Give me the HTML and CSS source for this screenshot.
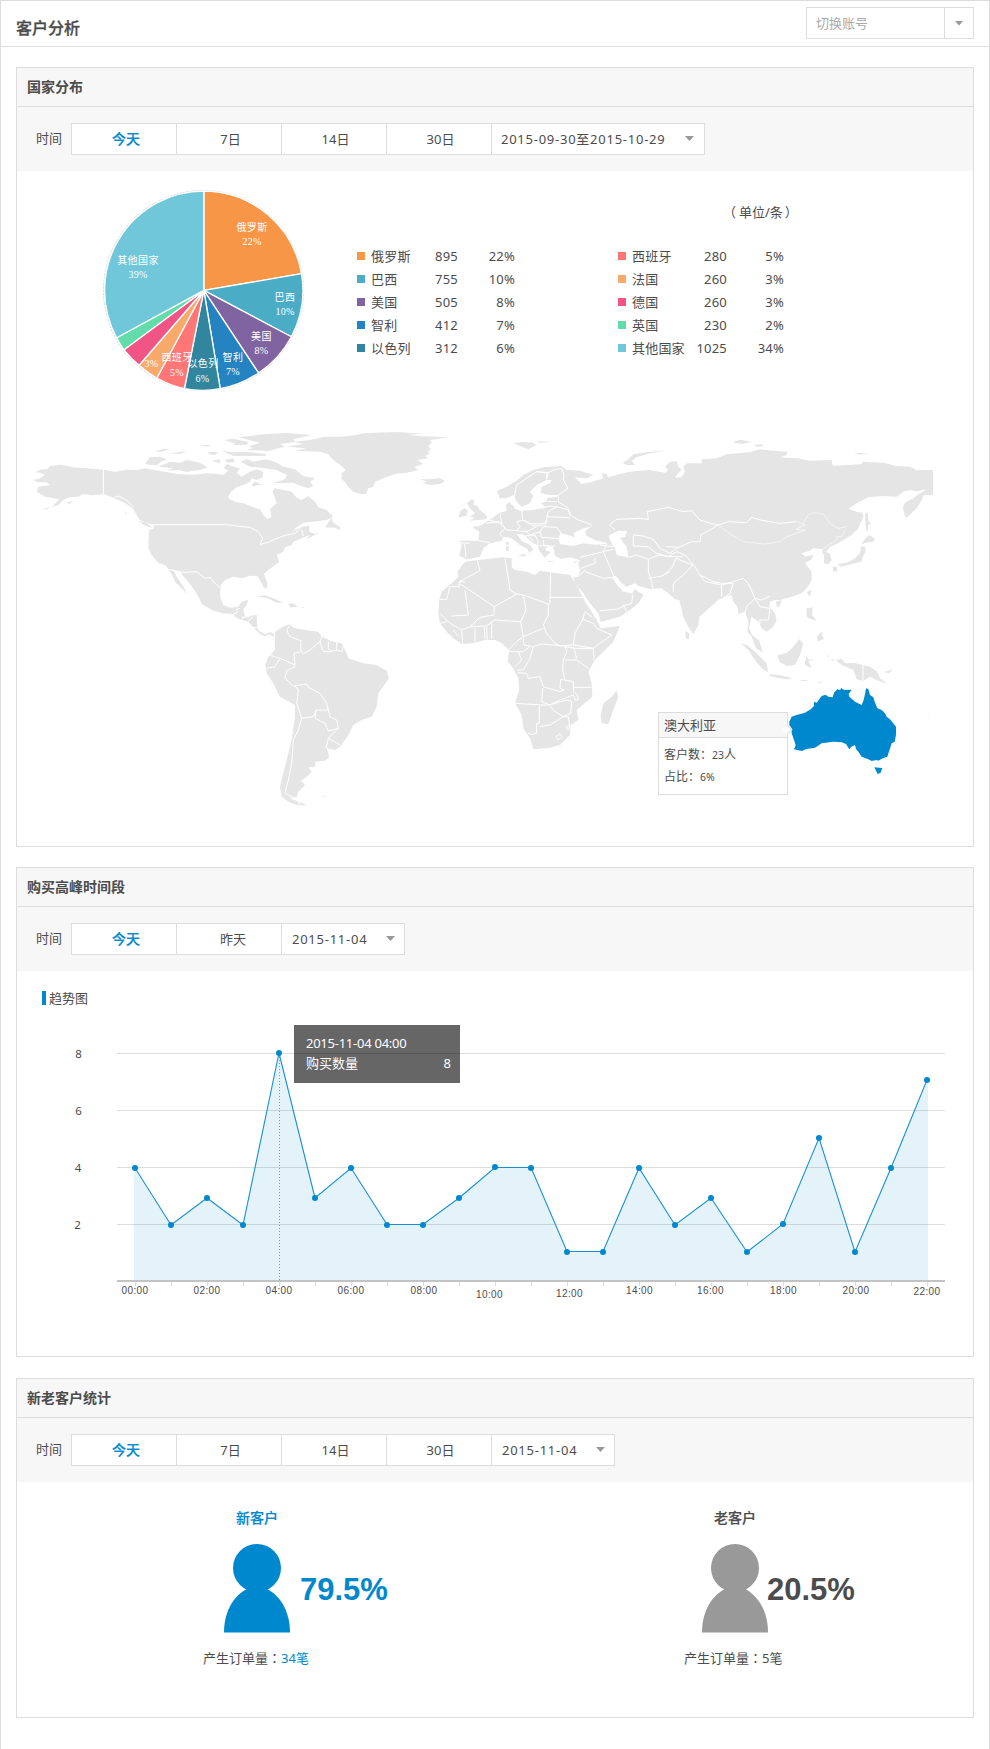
FILE: index.html
```html
<!DOCTYPE html>
<html lang="zh-CN">
<head>
<meta charset="utf-8">
<title>客户分析</title>
<link rel="stylesheet" href="styles.css">
</head>
<body>
<div class="page">
  <header class="topbar">
    <h1>客户分析</h1>
    <div class="account"><span class="account-text">切换账号</span><span class="account-btn"><i class="caret"></i></span></div>
  </header>

  <section class="panel panel-country">
    <h2>国家分布</h2>
    <div class="toolbar">
      <span class="tool-label">时间</span>
      <div class="tabs"><span class="tab active">今天</span><span class="tab">7日</span><span class="tab">14日</span><span class="tab">30日</span><span class="date range">2015-09-30至2015-10-29<i class="caret"></i></span></div>
    </div>
    <div class="distribution">
      <svg class="pie" width="210" height="210" viewBox="0 0 210 210">
        <g transform="translate(-20.300 -18) scale(.3355)" stroke="#fff" stroke-width="4" stroke-linejoin="round">
          <circle cx="372" cy="362" r="298" fill="#fff" stroke="#b9c6d4" stroke-width="2" stroke-dasharray="7 3"/>
          <path fill="#f79646" d="M373 362V66A296 296 0 0 1 664 312Z"/>
          <path fill="#4bacc6" d="M373 362L664 312A296 296 0 0 1 634 500Z"/>
          <path fill="#8064a2" d="M373 362L634 500A296 296 0 0 1 536 608Z"/>
          <path fill="#2483c0" d="M373 362L536 608A296 296 0 0 1 422 655Z"/>
          <path fill="#31859c" d="M373 362L422 655A296 296 0 0 1 315 655Z"/>
          <path fill="#ff7676" d="M373 362L315 655A296 296 0 0 1 233 623Z"/>
          <path fill="#f9aa6b" d="M373 362L233 623A296 296 0 0 1 180 585Z"/>
          <path fill="#f05585" d="M373 362L180 585A296 296 0 0 1 135 539Z"/>
          <path fill="#62dcaa" d="M373 362L135 539A296 296 0 0 1 113 503Z"/>
          <path fill="#70c7da" d="M373 362L113 503A296 296 0 0 1 373 66Z"/>
        </g>
        <g class="pie-names">
          <text x="153" y="44">俄罗斯</text><text x="186" y="114">巴西</text><text x="162.500" y="152.500">美国</text><text x="134" y="174">智利</text><text x="104" y="180">以色列</text><text x="78" y="174">西班牙</text><text x="39" y="76.500">其他国家</text>
        </g>
        <g class="pie-values">
          <text x="153" y="58">22%</text><text x="186" y="128">10%</text><text x="162.500" y="167">8%</text><text x="134" y="188">7%</text><text x="103.500" y="194.500">6%</text><text x="78" y="188.500">5%</text><text x="52.500" y="180">3%</text><text x="39" y="91">39%</text>
        </g>
      </svg>
      <div class="legend-block">
        <div class="unit"><span class="punct open" lang="zh-Hant">（</span>单位/条<span class="punct close" lang="zh-Hant">）</span></div>
        <div class="legends">
          <div class="legend">
            <i class="c1"></i><span>俄罗斯</span><b>895</b><b>22%</b>
            <i class="c2"></i><span>巴西</span><b>755</b><b>10%</b>
            <i class="c3"></i><span>美国</span><b>505</b><b>8%</b>
            <i class="c4"></i><span>智利</span><b>412</b><b>7%</b>
            <i class="c5"></i><span>以色列</span><b>312</b><b>6%</b>
          </div>
          <div class="legend second">
            <i class="c6"></i><span>西班牙</span><b>280</b><b>5%</b>
            <i class="c7"></i><span>法国</span><b>260</b><b>3%</b>
            <i class="c8"></i><span>德国</span><b>260</b><b>3%</b>
            <i class="c9"></i><span>英国</span><b>230</b><b>2%</b>
            <i class="c10"></i><span>其他国家</span><b>1025</b><b>34%</b>
          </div>
        </div>
      </div>
    </div>
    <div class="map">
      <svg width="956" height="436" viewBox="17 410 956 436">
        <!-- North America -->
        <g class="land" transform="translate(20 420) scale(.33333)">
          <path d="M45 157L65 148 82 148 90 138 125 134 160 142 200 145 250 149 285 155 320 149 350 150 375 145 400 150 440 156 475 163 520 164 560 160 590 162 610 165 625 152 612 145 620 132 640 140 660 145 650 158 665 170 690 155 710 148 730 155 728 172 710 180 695 175 690 185 675 193 650 202 630 218 624 235 645 245 670 250 700 262 720 268 730 285 742 297 755 290 750 268 770 250 765 235 758 215 762 205 790 210 815 215 830 233 845 240 865 228 885 245 895 262 920 270 940 290 920 300 880 305 850 308 830 322 815 335 845 320 868 317 868 335 885 342 900 338 860 357 870 345 845 355 820 365 815 375 795 382 790 395 770 405 778 425 745 450 732 462 742 490 740 508 730 500 720 480 712 468 690 467 665 475 640 470 615 480 602 495 600 530 610 555 630 563 655 560 665 545 685 540 680 555 670 568 675 590 710 585 712 622 718 634 735 643 750 636 763 643 760 650 748 642 735 649 720 642 700 622 685 605 665 600 645 590 640 582 610 580 580 572 545 552 538 535 520 505 500 480 480 455 462 452 470 470 490 500 503 523 485 505 465 485 455 462 447 450 438 437 415 428 395 405 385 385 387 330 400 326 402 318 385 310 360 300 350 285 340 268 320 252 295 240 280 235 250 223 215 226 190 222 175 230 150 232 130 240 115 255 95 262 118 238 75 230 50 215 55 200 90 195 80 187 50 186 40 180 60 175 75 165 60 158Z"/>
          <path d="M375 130L390 112 420 110 440 118 425 125 410 135 385 134ZM415 140L450 125 480 128 500 120 540 128 562 142 540 150 500 155 475 150 440 152 460 145ZM405 95L430 86 450 88 425 95ZM445 100L500 94 480 102ZM540 76L575 74 560 80ZM562 97L595 96 585 105 568 103ZM575 122L600 118 600 130ZM612 120L640 115 645 125 625 128ZM605 92L640 97 675 95 740 102 735 108 640 108ZM612 60L640 56 685 66 680 74 640 76 645 70ZM655 52L730 43 800 39 875 45 820 58 825 66 780 72 795 80 745 93 680 90 700 84 685 80 720 68ZM662 125L680 117 700 125 740 118 770 128 790 140 825 148 850 168 885 175 870 185 880 198 865 205 835 195 820 188 785 190 760 188 795 178 800 165 770 150 735 145 690 140ZM695 195L705 184 720 192 738 196 715 195 700 200ZM915 322L935 293 940 308 960 322 960 331 945 323ZM355 303L378 307 398 324 375 317ZM140 247L158 243 148 252ZM315 277L323 278 318 282ZM62 270L92 260 80 268ZM710 530L735 525 765 537 790 548 770 548 740 533ZM803 552L818 550 835 560 812 562ZM840 562L855 562 850 565Z"/>
        </g>
        <g class="border" transform="translate(20 420) scale(.33333)">
          <path d="M250 149V223L280 235 295 228 320 240 340 262M385 314H620L650 318 690 322 715 335 728 355 720 373 745 367 770 355 800 345 825 340 845 320M845 330L850 348M447 448L490 457 530 455 555 475 570 472 585 490 600 503M640 582L652 578 650 568 660 565M665 600L668 592 690 590M685 603L700 590M700 624L714 622"/>
        </g>
        <!-- Greenland, Europe and Asia -->
        <g class="land" transform="translate(340 420) scale(.33333)">
          <path d="M-140 66L-90 60 -45 50 0 50 45 46 70 40 170 36 250 41 200 44 245 49 325 52 270 60 275 68 265 78 272 88 262 95 270 100 255 108 265 115 232 120 250 132 222 140 235 150 200 158 165 162 130 175 105 185 100 200 85 205 78 222 65 223 40 215 25 200 15 185 5 178 5 160 18 150 5 138 -20 120 -35 103 -60 95 -135 92 -100 85 -160 80 -110 72Z"/>
          <path d="M238 178L262 178 300 175 315 183 300 192 270 195 250 190 260 184ZM380 250L395 238 404 242 400 253 412 258 418 268 430 278 442 290 438 298 415 300 390 302 403 294 390 290 405 280 395 270 388 262ZM362 272L375 265 384 272 378 288 355 292ZM520 70L545 66 580 68 588 76 565 88 545 80ZM585 64L640 65 600 68ZM848 130L865 118 880 103 920 97 980 91 925 101 890 112 875 122 885 134 862 136ZM512 252L526 262 515 265ZM534 405L560 402 552 411ZM620 422L648 423 630 426ZM698 427L714 422 705 430ZM498 366H506V374H498ZM498 378H506V392H498Z"/>
          <path d="M472 212L500 200 525 185 550 165 580 150 610 142 665 138 680 150 720 152 760 165 740 175 705 172 712 180 725 192 755 186 790 175 785 160 800 162 805 172 840 162 870 155 900 152 930 150 975 158 985 150 975 140 990 125 1010 123 1015 140 1025 150 1010 165 1005 173 1025 172 1035 155 1030 140 1040 130 1085 130 1085 118 1130 115 1160 103 1230 96 1260 88 1300 92 1342 95 1340 105 1320 112 1370 115 1410 122 1475 120 1478 137 1530 135 1565 132 1570 125 1630 128 1670 138 1710 140 1730 150 1779 150V224L1750 226 1745 240 1730 265 1698 295 1688 265 1695 248 1720 235 1740 220 1760 208 1730 214 1710 210 1690 215 1670 230 1630 228 1585 232 1550 250 1525 266 1550 275 1568 278 1570 290 1555 325 1535 345 1510 360 1490 372 1470 380 1458 395 1470 402 1475 420 1465 432 1452 430 1452 405 1445 395 1450 388 1420 385 1410 392 1385 400 1395 410 1420 405 1415 418 1395 430 1415 455 1415 480 1400 505 1385 520 1350 532 1320 540 1305 540 1290 545 1288 560 1305 580 1310 600 1300 620 1280 635 1265 625 1255 605 1235 590 1232 600 1228 625 1236 645 1258 662 1268 698 1248 685 1235 650 1222 635 1226 610 1220 590 1215 575 1195 582 1192 560 1180 545 1175 525 1155 530 1135 540 1110 562 1078 590 1075 615 1060 643 1045 620 1030 590 1018 540 1005 538 985 520 965 505 930 507 895 498 885 490 860 500 845 490 830 470 820 465 818 475 835 500 850 512 875 520 885 508 910 525 895 550 870 570 840 590 782 606 775 580 750 550 730 520 705 490 700 473 715 470 720 450 715 430 720 420 690 412 665 417 645 408 640 385 625 378 615 390 632 395 615 413 600 395 590 375 570 362 550 343 530 342 545 362 570 375 580 390 568 398 560 385 540 375 515 355 490 350 485 362 450 370 430 385 420 410 380 418 358 408 365 375 358 362 415 362 418 335 395 320 420 318 440 305 460 292 475 280 500 272 497 255 510 245 515 262 540 272 580 270 605 265 615 260 603 250 620 244 622 234 650 232 655 225 620 224 602 218 605 200 630 190 635 180 620 180 590 195 570 215 580 228 570 250 545 260 530 245 522 225 500 235 478 235Z"/>
          <path class="sea" d="M655 355L662 340 685 345 705 352 700 340 730 325 752 320 735 335 740 348 770 362 800 372 765 374 730 370 700 378 660 372ZM805 347L835 332 862 334 855 350 840 355 860 380 865 412 830 405 825 385 812 365ZM618 392L645 375 638 385 645 396Z"/>
          <path d="M1575 280L1583 278 1585 300 1593 315 1585 312 1583 335 1578 330ZM1580 350L1590 345 1605 358 1600 365 1575 368 1563 374ZM1563 378L1575 380 1577 395 1568 412 1565 425 1550 428 1525 435 1500 440 1492 432 1520 428 1545 415 1560 400ZM1478 440L1492 440 1490 456 1480 452ZM1308 545L1325 540 1320 558 1310 562ZM1400 518L1415 508 1410 530ZM1400 565L1418 562 1416 585 1430 602 1412 598 1400 590ZM1182 65L1200 59 1235 66 1210 71 1185 70ZM1243 76L1262 72 1272 78 1250 80ZM1542 101L1560 99 1588 102 1560 104ZM1036 633L1048 640 1047 658 1037 655Z"/>
        </g>
        <g class="border" transform="translate(340 420) scale(.33333)">
          <path d="M522 235L530 195 560 175 590 155 625 160 620 178M590 155L625 158 640 150 665 145 672 165 670 180 684 205 655 225 655 245 685 265 690 285M620 178L620 160M622 244L650 245M605 265L630 258 650 262M620 290L625 275 650 260 685 270 690 285 715 300 750 312 755 320M545 272L548 300 575 312 615 310 622 290 690 293M622 300L615 318M480 280L485 312 500 330 530 332M485 310L445 300M440 310L475 305 495 325 480 340 485 350M530 305L550 300 580 318 610 316M530 305L540 320 530 332 560 335 590 320M560 335L570 345 600 335 610 320 650 322 668 345M555 348L585 345 595 365 590 385M565 350L580 362M600 335L605 352 660 356M610 360L612 378 640 378M590 378L625 376M374 372L378 410M358 368L390 370M415 362L450 368M755 360L800 370 790 395 820 388M780 375L820 380M790 395L720 412M765 412L765 430 722 445M790 395L805 430 820 465M735 455L790 475 820 472M715 470L735 450M780 572L830 568 860 555 875 550 878 525M850 555L860 575M845 512L880 520M865 412L890 405 925 418 925 455 935 485 938 505M925 418L955 405 990 410M925 475L965 468 990 455M808 315L830 298 900 295 925 298 922 275 985 262 1030 275 1055 272 1080 300 1110 310 1135 315M808 315L825 330M880 345L910 348 940 358 960 385 990 400 1010 385 1055 365 1080 365 1082 345 1135 315M880 345V378L925 380 950 400 985 410 1010 395 1035 405M980 380L1015 382M990 410H1030M1008 415L995 445 965 470M1035 405L1065 440 1080 465 1095 485 1145 495 1180 485 1210 475 1225 490 1245 535 1265 540 1290 528M1008 415L1058 435 1030 465 1000 490 1000 515M1080 465L1120 485 1145 490 1145 530M1145 490L1180 490 1170 520 1155 530M1245 535L1220 560 1215 580M1245 535L1260 560 1290 565 1285 600M1285 600L1260 600 1258 620M1135 315L1165 305 1220 308 1235 292 1260 300 1320 310 1370 305"/>
          <path class="faint" d="M1370 305L1395 315 1368 328 1395 330 1340 350 1320 365 1275 372 1210 365 1175 345 1135 315M1390 308L1405 285 1420 278 1450 282 1470 310 1495 325 1522 320M1518 325L1505 350 1490 350 1490 360 1465 375 1445 390"/>
        </g>
        <!-- South America and Africa -->
        <g class="land" transform="translate(240 600) scale(.33333)">
          <path d="M105 95L130 80 150 73 160 83 195 90 235 95 245 110 280 125 305 130 320 160 325 175 370 190 410 195 440 212 447 235 415 280 410 320 395 350 365 360 340 375 325 405 300 440 285 450 260 445 268 470 255 482 225 485 225 500 205 502 215 515 200 530 183 542 195 555 175 575 170 590 150 595 175 605 200 614 175 617 145 605 125 590 120 560 130 520 140 480 155 420 165 350 165 315 120 290 100 250 80 220 76 195 85 170 105 150 105 110ZM245 588L258 587 252 591Z"/>
          <path d="M598 0L605 -25 640 -55 655 -70 652 -85 675 -115 715 -120 790 -128 815 -125 815 -100 825 -90 860 -85 885 -75 900 -88 930 -83 990 -75 1000 -60 1015 -35 1035 5 1055 35 1070 60 1082 85 1140 77 1120 125 1065 180 1045 215 1055 250 1057 290 1010 330 1015 360 992 375 990 405 960 435 930 443 880 448 870 415 850 385 845 345 825 310 838 270 835 235 820 205 803 185 808 150 785 130 765 120 735 120 700 130 665 132 640 115 620 95 600 70 595 40ZM1130 272L1135 290 1120 330 1105 372 1085 370 1082 345 1090 310 1115 290Z"/>
        </g>
        <g class="border" transform="translate(240 600) scale(.33333)">
          <path d="M150 76L140 90 150 110 183 122 182 150 190 162 210 150 240 125 245 110M182 155L162 160 165 200 140 212 135 235 160 258 200 252 205 262 240 280 260 310 265 330M88 165L120 175 165 195M120 175L105 200 80 205M165 258L175 270 170 310 185 355 220 350 228 330 265 330 270 350 290 360 295 385 265 393 255 370 225 355 228 330M185 355L175 390 160 420 155 490 145 540 135 580 175 600 178 617M295 385L265 415 300 435M265 415L258 445M240 125L250 155 270 155 290 150 305 155 312 135M265 125V145L275 155M290 125L290 150"/>
          <path d="M600 -2H620L630 -40H658V-55H675M658 -50L763 20 830 -18 850 -15 925 12 930 8 932 -83M675 -30L685 45 635 48M658 -55L720 -88 712 -118M795 -125L805 -65 810 -30 830 -18M930 -8H1030M850 -15L858 30 842 65 762 60 740 78 690 80 665 90 630 70 600 40M763 20L762 45 720 52 690 80M925 12L925 45 910 75 920 100 945 130 960 138 1000 135M910 85L850 110 842 65M755 65V115M740 80L742 120M733 82L735 118M705 85V130M665 92L668 130M640 90L655 110M600 70L620 65M850 115L852 135 880 140 905 132 975 138M850 110L830 125 805 150M808 155L820 155 850 155 870 140M880 140L870 175 850 210 830 210M835 155L845 180 825 200M835 218L860 220 865 235 900 230 910 260 960 275 972 270 960 265 962 238 1000 245 1000 275 1012 285 1015 300 1005 300 1000 285 960 300 930 315 905 305 908 265M975 138L980 155 970 180 968 210 975 240M975 180H1010L1045 205M1000 140L1010 175M975 140L1005 145 1060 145 1062 180M1060 145L1115 105 1070 85 1060 70 1028 58 1005 100 1000 135 1060 145M1028 58L1035 35 1055 50M1000 262L1055 262M825 310L905 315 930 315 980 300 995 305 992 340 970 350 945 335 930 318M898 318L898 370 890 370 890 400 875 403 865 400M898 380L930 375 970 350 985 350 990 385M948 410L960 402 967 410 955 420ZM978 382L986 377 990 385 982 390Z"/>
        </g>
        <!-- South-east Asia and Australia -->
        <g class="land" transform="translate(640 600) scale(.33333)">
          <path d="M302 128L325 138 350 160 380 190 384 217 365 205 345 180 325 150ZM385 222L420 226 458 235 440 238 395 230ZM412 165L440 160 478 118 490 130 480 165 465 195 440 198 418 185ZM495 180L530 177 505 183 515 205 495 195ZM530 110L545 95 551 118 535 124ZM498 168L505 175 498 192ZM475 240L510 240 490 244ZM530 250L550 240 540 250ZM562 162L567 172 562 170ZM570 180L585 177 580 182ZM588 180L605 176 615 190 640 188 690 200 712 215 720 235 742 252 710 240 690 230 670 243 650 238 640 210 605 195ZM732 217L758 207 748 220ZM860 337L876 348 868 344ZM778 212L788 224 782 218Z"/>
          <path class="highlight" d="M448 365L455 350 470 345 495 338 512 328 522 318 522 305 530 308 545 288 556 284 565 290 578 292 582 278 592 268 600 270 604 264 612 270 635 269 626 282 628 290 645 305 665 315 671 300 675 282 678 265 685 267 690 285 700 292 704 305 712 325 725 330 735 340 740 350 750 358 768 380 768 405 764 425 755 430 742 470 728 475 715 482 710 480 695 483 685 478 665 470 655 455 648 447 645 435 634 440 628 448 618 432 605 427 580 425 545 430 525 443 500 447 485 453 462 448 467 436 462 420 455 400 455 385 448 375ZM703 502L727 504 722 518 713 522Z"/>
        </g>
        <path class="border" d="M863 663V683M780 653L790 650 797 641"/>
      </svg>
      <div class="map-tip"><div class="map-tip-title">澳大利亚</div><p>客户数：<span>23</span>人</p><p>占比：<span>6%</span></p></div>
    </div>
  </section>

  <section class="panel panel-trend">
    <h2>购买高峰时间段</h2>
    <div class="toolbar">
      <span class="tool-label">时间</span>
      <div class="tabs"><span class="tab active">今天</span><span class="tab yesterday">昨天</span><span class="date single">2015-11-04<i class="caret"></i></span></div>
    </div>
    <div class="trend">
      <div class="trend-title">趋势图</div>
      <svg class="trend-chart" width="956" height="345" viewBox="17 1011 956 345">
        <path class="grid" d="M117 1053.500H945M117 1110.500H945M117 1167.500H945M117 1224.500H945"/>
        <path class="area" d="M134 1281V1168L171 1225 207 1198 243 1225 279 1053 315 1198 351 1168 387 1225 423 1225 459 1198 495 1167 531 1168 567 1252 603 1252 639 1168 675 1225 711 1198 747 1252 783 1224 819 1138 855 1252 891 1168 928 1080V1281Z"/>
        <path class="axis" d="M117 1281H945"/>
        <path class="grid" d="M135.500 1282v4m36-4v4m36-4v4m36-4v4m36-4v4m36-4v4m36-4v4m36-4v4m36-4v4m36-4v4m36-4v4m36-4v4m36-4v4m36-4v4m36-4v4m36-4v4m36-4v4m36-4v4m36-4v4m36-4v4m36-4v4m36-4v4m36-4v4"/>
        <path class="cursor" d="M279.500 1054V1280"/>
        <polyline class="line" points="135,1168 171,1225 207,1198 243,1225 279,1053 315,1198 351,1168 387,1224.500 423,1224.500 459,1198 495,1167.500 531,1167.500 567,1251.500 603,1251.500 639,1168 675,1225 711,1198 747,1252 783,1224 819,1138 855,1252 891,1168 927,1080"/>
        <g class="dots"><circle cx="135" cy="1168" r="3"/><circle cx="171" cy="1225" r="3"/><circle cx="207" cy="1198" r="3"/><circle cx="243" cy="1225" r="3"/><circle cx="279" cy="1053" r="3"/><circle cx="315" cy="1198" r="3"/><circle cx="351" cy="1168" r="3"/><circle cx="387" cy="1225" r="3"/><circle cx="423" cy="1225" r="3"/><circle cx="459" cy="1198" r="3"/><circle cx="495" cy="1167" r="3"/><circle cx="531" cy="1168" r="3"/><circle cx="567" cy="1252" r="3"/><circle cx="603" cy="1252" r="3"/><circle cx="639" cy="1168" r="3"/><circle cx="675" cy="1225" r="3"/><circle cx="711" cy="1198" r="3"/><circle cx="747" cy="1252" r="3"/><circle cx="783" cy="1224" r="3"/><circle cx="819" cy="1138" r="3"/><circle cx="855" cy="1252" r="3"/><circle cx="891" cy="1168" r="3"/><circle cx="927" cy="1080" r="3"/></g>
        <g class="y-labels"><text x="78.500" y="1057.500">8</text><text x="78.500" y="1114.500">6</text><text x="78" y="1171.500">4</text><text x="77.500" y="1228.500">2</text></g>
        <g class="x-labels"><text x="135" y="1294">00:00</text><text x="207" y="1294">02:00</text><text x="279" y="1294">04:00</text><text x="351" y="1294">06:00</text><text x="424" y="1294">08:00</text><text x="489.500" y="1298">10:00</text><text x="569.500" y="1297">12:00</text><text x="639.500" y="1294">14:00</text><text x="710.500" y="1294">16:00</text><text x="783.500" y="1294">18:00</text><text x="856" y="1294">20:00</text><text x="927" y="1295">22:00</text></g>
      </svg>
      <div class="trend-tip"><div>2015-11-04 04:00</div><div class="tip-row"><span>购买数量</span><span>8</span></div></div>
    </div>
  </section>

  <section class="panel panel-customers">
    <h2>新老客户统计</h2>
    <div class="toolbar">
      <span class="tool-label">时间</span>
      <div class="tabs"><span class="tab active">今天</span><span class="tab">7日</span><span class="tab">14日</span><span class="tab">30日</span><span class="date single">2015-11-04<i class="caret"></i></span></div>
    </div>
    <div class="customers">
      <div class="customer new">
        <h3>新客户</h3>
        <div class="figure"><svg width="66" height="89" viewBox="0 0 66 89"><circle cx="33" cy="24" r="24"/><path d="M0 88.500C0 66 11 50 25 44H41C55 50 66 66 66 88.500Z"/></svg><strong>79.5%</strong></div>
        <p>产生订单量<span class="punct" lang="zh-Hant">：</span><span class="count">34笔</span></p>
      </div>
      <div class="customer old">
        <h3>老客户</h3>
        <div class="figure"><svg width="66" height="89" viewBox="0 0 66 89"><circle cx="33" cy="24" r="24"/><path d="M0 88.500C0 66 11 50 25 44H41C55 50 66 66 66 88.500Z"/></svg><strong>20.5%</strong></div>
        <p>产生订单量<span class="punct" lang="zh-Hant">：</span><span class="count">5笔</span></p>
      </div>
    </div>
  </section>
</div>
</body>
</html>
```
FILE: styles.css
```css
* { box-sizing: border-box; }
body { margin: 0; background: #fff; color: #4c4c4c; font: 13px/20px "Noto Sans", "Noto Sans CJK SC", sans-serif; }
h1, h2, h3, p { margin: 0; }
.punct { font-family: "Noto Sans CJK TC", sans-serif; line-height: 1; }
.punct.open { margin-right: 3px; }
.punct.close { margin-left: 2px; }
.page { width: 990px; height: 1749px; border: 1px solid #ddd; border-bottom: 0; }
.topbar { height: 46px; padding: 6px 15px 0; border-bottom: 1px solid #ddd; display: flex; justify-content: space-between; align-items: flex-start; }
h1 { font-size: 16px; line-height: 24px; padding-top: 9px; font-weight: 500; -webkit-text-stroke: .3px; }
.account { display: flex; width: 168px; height: 32px; border: 1px solid #ddd; line-height: 30px; color: #aaa; }
.account-text { flex: 1; padding-left: 9px; }
.account-btn { width: 29px; border-left: 1px solid #ddd; display: flex; align-items: center; justify-content: center; }
.caret { width: 9px; height: 5px; background: #999; clip-path: polygon(0 0, 100% 0, 50% 100%); }

.panel { margin: 20px 15px 0; border: 1px solid #ddd; }
.panel-country { height: 780px; }
.panel-trend { height: 490px; }
.panel-customers { height: 340px; margin-top: 21px; }
h2 { height: 39px; padding-left: 10px; line-height: 38px; font-size: 14px; font-weight: 700; background: #f7f7f7; border-bottom: 1px solid #ddd; }
.toolbar { height: 64px; padding: 16px 0 0 19px; display: flex; background: #f7f7f7; line-height: 30px; }
.tool-label { width: 35px; line-height: 31px; }
.tabs { display: flex; height: 32px; border: 1px solid #ddd; background: #fff; }
.tab { width: 105px; padding-left: 3px; border-right: 1px solid #ddd; text-align: center; }
.tab.active { padding-left: 4px; color: #08c; font-size: 14px; font-weight: 500; -webkit-text-stroke: .2px; }
.tab.yesterday { padding-left: 8px; }
.date { display: flex; align-items: center; justify-content: space-between; padding: 0 10px 0 9px; letter-spacing: .75px; white-space: nowrap; }
.date .caret { margin-top: -1px; }
.date.range { width: 212px; }
.date.single { width: 122px; padding: 0 9px 0 10px; }

.distribution { height: 239px; padding: 16px 0 0 82px; display: flex; }
.pie { flex: none; }
.pie-names { font: 10px "Noto Sans CJK SC", sans-serif; fill: #fff; text-anchor: middle; letter-spacing: .4px; }
.pie-values { font: 10px "Liberation Serif", serif; fill: #fff; text-anchor: middle; letter-spacing: .3px; }
.legend-block { padding: 15px 0 0 48px; }
.unit { padding-left: 366px; height: 42px; }
.legends { display: flex; }
.legend { width: 158px; display: grid; grid-template-columns: 14px 1fr auto 57px; grid-auto-rows: 23px; align-items: center; letter-spacing: .2px; }
.legend.second { width: 166px; margin-left: 103px; }
.legend i { width: 8px; height: 8px; }
.legend b { font-weight: 400; text-align: right; }
.c1 { background: #f79646; } .c2 { background: #4bacc6; } .c3 { background: #8064a2; } .c4 { background: #2483c0; } .c5 { background: #31859c; }
.c6 { background: #ff7676; } .c7 { background: #f9aa6b; } .c8 { background: #f05585; } .c9 { background: #62dcaa; } .c10 { background: #70c7da; }
.map { position: relative; height: 436px; }
.map svg { display: block; }
.land { fill: #e5e5e5; }
.sea { fill: #fff; }
.highlight { fill: #0088ce; }
.border { fill: none; stroke: #fff; stroke-width: 3; stroke-linejoin: round; }
.faint { stroke-opacity: .6; }
path.border { stroke-width: 1; }
.map-tip { position: absolute; left: 641px; top: 302px; width: 130px; height: 83px; border: 1px solid #ddd; background: #fff; font-size: 12px; line-height: 22px; }
.map-tip::after { content: ""; position: absolute; left: 125px; top: 13px; width: 6px; height: 6px; border: solid #ddd; border-width: 1px 1px 0 0; background: #fff; transform: rotate(45deg); }
.map-tip-title { height: 25px; padding-left: 5px; line-height: 24px; font-size: 13px; background: #f7f7f7; border-bottom: 1px solid #ddd; margin-bottom: 6px; }
.map-tip p { padding-left: 5px; }
.map-tip span { font-size: 10.500px; }

.trend { position: relative; }
.trend-title { height: 40px; padding: 17px 0 0 25px; display: flex; gap: 3px; }
.trend-title::before { content: ""; width: 4px; height: 14px; margin-top: 3px; background: #08c; }
.trend-chart { display: block; }
.grid { fill: none; stroke: #ddd; }
.axis { stroke: #c3c3c3; stroke-width: 2; }
.area { fill: #08c; fill-opacity: .105; }
.cursor { stroke: #35b9b9; stroke-dasharray: 1 2; }
.line { fill: none; stroke: #1890d0; stroke-width: 1.100; }
.dots { fill: #0088ce; }
.y-labels { font: 11.500px "Noto Sans", sans-serif; fill: #4c4c4c; text-anchor: middle; }
.x-labels { font: 10px "Liberation Sans", sans-serif; fill: #4c4c4c; text-anchor: middle; letter-spacing: .4px; }
.trend-tip { position: absolute; left: 277px; top: 54px; width: 166px; height: 58px; padding: 8px 9px 0 12px; background: rgba(0,0,0,.6); color: #fff; letter-spacing: -.25px; }
.tip-row { display: flex; justify-content: space-between; letter-spacing: 0; }

.customers { display: flex; padding-top: 26px; }
.customer { width: 478px; }
h3 { width: 480px; text-align: center; font-size: 14px; line-height: 20px; font-weight: 500; -webkit-text-stroke: .2px; }
.figure { display: flex; height: 89px; margin: 16px 0 0 207px; }
.figure strong { padding: 28px 0 0 10px; font: 700 31px/36px "Liberation Sans", sans-serif; }
.customer p { margin: 15px 0 0 186px; }
.new h3, .new strong, .new .count { color: #08c; }
.new svg { fill: #0088ce; }
.old svg { fill: #999; }
.old strong { padding-left: 0; margin-left: -1px; }
.old p { margin-left: 189px; }
```
